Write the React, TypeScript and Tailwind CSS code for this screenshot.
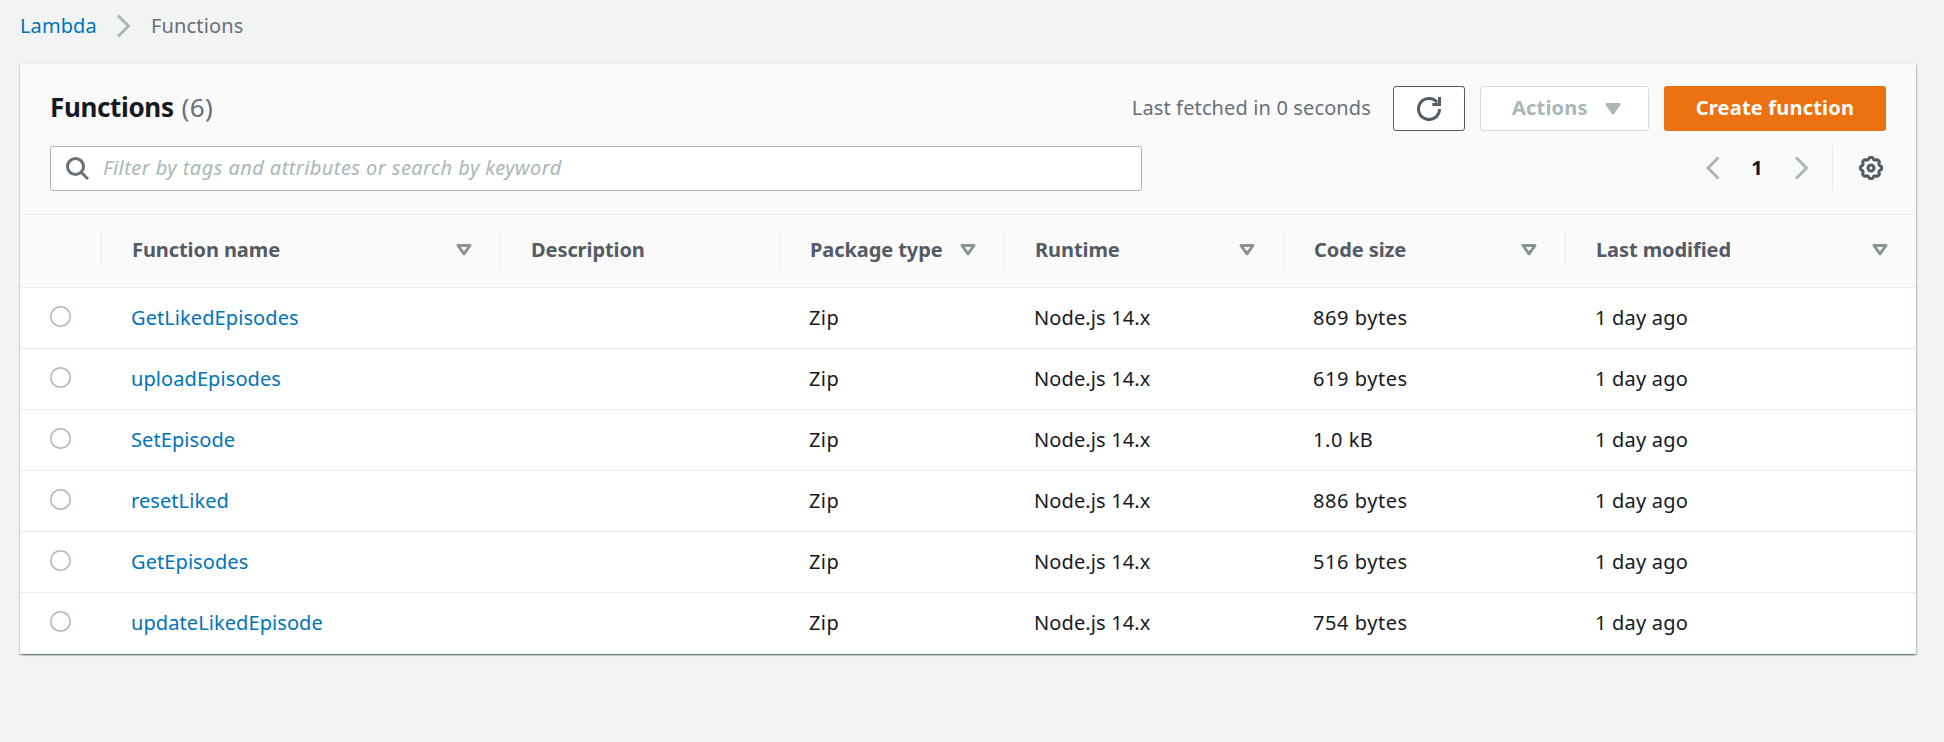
import type { ReactNode } from "react";

type LambdaFunction = {
  name: string;
  packageType: string;
  runtime: string;
  codeSize: string;
  lastModified: string;
};

const functions: LambdaFunction[] = [
  { name: "GetLikedEpisodes", packageType: "Zip", runtime: "Node.js 14.x", codeSize: "869 bytes", lastModified: "1 day ago" },
  { name: "uploadEpisodes", packageType: "Zip", runtime: "Node.js 14.x", codeSize: "619 bytes", lastModified: "1 day ago" },
  { name: "SetEpisode", packageType: "Zip", runtime: "Node.js 14.x", codeSize: "1.0 kB", lastModified: "1 day ago" },
  { name: "resetLiked", packageType: "Zip", runtime: "Node.js 14.x", codeSize: "886 bytes", lastModified: "1 day ago" },
  { name: "GetEpisodes", packageType: "Zip", runtime: "Node.js 14.x", codeSize: "516 bytes", lastModified: "1 day ago" },
  { name: "updateLikedEpisode", packageType: "Zip", runtime: "Node.js 14.x", codeSize: "754 bytes", lastModified: "1 day ago" },
];

const columns = [
  { label: "Function name", sortable: true },
  { label: "Description", sortable: false },
  { label: "Package type", sortable: true },
  { label: "Runtime", sortable: true },
  { label: "Code size", sortable: true },
  { label: "Last modified", sortable: true },
];

const gridColumns = "grid grid-cols-[82px_399px_279px_225px_279px_282px_350px]";

function Icon({ children, className = "" }: { children: ReactNode; className?: string }) {
  return (
    <svg viewBox="0 0 16 16" fill="none" stroke="currentColor" strokeWidth="2" className={`size-6 shrink-0 ${className}`}>
      {children}
    </svg>
  );
}

const ChevronRight = ({ className }: { className?: string }) => (
  <Icon className={className}>
    <path d="M4 1l7 7-7 7" />
  </Icon>
);

const ChevronLeft = ({ className }: { className?: string }) => (
  <Icon className={className}>
    <path d="M11 1L4 8l7 7" />
  </Icon>
);

// Outline of the settings cog: a circle whose radius steps out at eight teeth.
const cogPath =
  Array.from({ length: 96 }, (_, i) => {
    const angle = (i / 96) * Math.PI * 2;
    const radius = 6.45 + 0.6 * Math.tanh(2.2 * Math.cos(8 * angle) + 0.3);
    return `${i === 0 ? "M" : "L"}${(8 + radius * Math.cos(angle)).toFixed(2)} ${(8 + radius * Math.sin(angle)).toFixed(2)}`;
  }).join("") + "Z";

export default function App() {
  return (
    <div className="min-h-[742px] bg-[#f2f3f3] pl-5 font-['Noto_Sans','Open_Sans',sans-serif] text-[20px] leading-[30px] text-[#16191f]">
      <nav className="flex h-[63px] items-start pt-[11px]">
        <a className="w-[92px] tracking-[0.1px] text-[#0073bb]">Lambda</a>
        <ChevronRight className="mt-[3px] text-[#aab7b8]" />
        <span className="ml-[15px] tracking-[0.15px] text-[#687078]">Functions</span>
      </nav>

      <main className="w-[1896px] border-t border-[#eaeded] bg-white shadow-[0_1.5px_1.5px_0_rgba(0,28,36,0.3),1.5px_1.5px_1.5px_0_rgba(0,28,36,0.15),-1.5px_1.5px_1.5px_0_rgba(0,28,36,0.15)]">
        <header className="h-[151px] border-b border-[#eaeded] bg-[#fafafa] pr-[30px] pl-[30px] pt-[22px]">
          <div className="flex h-[45px] items-center">
            <h1 className="flex-1 pb-[3px] text-[26px] leading-[36px]">
              <span className="font-bold tracking-[-0.35px]">Functions</span>
              <span className="ml-[8px] tracking-[0.4px] text-[#687078]">(6)</span>
            </h1>
            <span className="pb-[2px] tracking-[0.13px] text-[#687078]">Last fetched in 0 seconds</span>
            <button className="ml-[22px] flex h-[45px] w-[72px] items-center justify-center rounded-[3px] border border-[#545b64] bg-white text-[#545b64]">
              <Icon>
                <path d="M10.2 5H15V0" />
                <path d="M15 8a7 7 0 1 1-1.6-4.45" />
              </Icon>
            </button>
            <button className="ml-[15px] flex h-[45px] w-[169px] items-center rounded-[3px] border border-[#d5dbdb] bg-white pl-[31px] font-bold text-[#aab7b8]">
              <span className="w-[89px] pb-[2px] text-left tracking-[0.2px]">Actions</span>
              <Icon>
                <path d="M4 5h8l-4 5.6z" fill="currentColor" strokeLinejoin="round" />
              </Icon>
            </button>
            <button className="ml-[15px] h-[45px] w-[222px] rounded-[3px] bg-[#ec7211] pb-[2px] font-bold tracking-[0.2px] text-white">
              Create function
            </button>
          </div>

          <div className="mt-[15px] flex h-[45px] items-center">
            <div className="flex h-[45px] w-[1092px] items-center rounded-[3px] border border-[#aab7b8] bg-white pl-[14px]">
              <Icon className="mb-px text-[#687078]">
                <circle cx="7" cy="7" r="5.35" />
                <path d="M10.8 10.8l4.5 4.5" />
              </Icon>
              <span className="ml-[14px] pb-px tracking-[0.44px] text-[#aab7b8] italic">
                Filter by tags and attributes or search by keyword
              </span>
            </div>
            <div className="ml-auto flex h-[45px] items-center">
              <ChevronLeft className="mb-[2px] text-[#aab7b8]" />
              <span className="w-16 pr-[2px] pb-px text-center font-bold">1</span>
              <ChevronRight className="mb-[2px] text-[#aab7b8]" />
              <div className="ml-[18px] flex h-[45px] w-[54px] items-center justify-end border-l border-[#eaeded] pr-[3px]">
                <Icon className="mb-[2px] text-[#545b64]">
                  <path d={cogPath} strokeWidth="2" strokeLinejoin="round" />
                  <circle cx="8" cy="8" r="2" />
                </Icon>
              </div>
            </div>
          </div>
        </header>

        <div className={`${gridColumns} h-[73px] items-center border-b border-[#eaeded] bg-[#fafafa] font-bold text-[#545b64]`}>
          <div className="mb-[2px] h-9 border-r border-[#eaeded]" />
          {columns.map((column) => (
            <div key={column.label} className="mb-[2px] flex h-9 items-center justify-between border-r border-[#eaeded] pr-6 pl-[30px] last:border-r-0">
              <span className="tracking-[-0.08px] whitespace-nowrap">{column.label}</span>
              {column.sortable && (
                <Icon className="text-[#879596]">
                  <path d="M4 5h8l-4 5.6z" strokeLinejoin="round" />
                </Icon>
              )}
            </div>
          ))}
        </div>

        {functions.map((fn) => (
          <div key={fn.name} className={`${gridColumns} h-[61px] items-center border-b border-[#eaeded]`}>
            <div className="pb-[3px] pl-[30px]">
              <svg viewBox="0 0 21 21" className="size-[21px]" fill="#fff" stroke="#aab7b8" strokeWidth="1.5">
                <circle cx="10.5" cy="10.5" r="9.75" />
              </svg>
            </div>
            <a className="pb-px pl-[29px] tracking-[0.08px] text-[#0073bb]">{fn.name}</a>
            <span />
            <span className="pb-px pl-[29px] tracking-[0.4px]">{fn.packageType}</span>
            <span className="pb-px pl-[29px] tracking-[0.12px]">{fn.runtime}</span>
            <span className="pb-px pl-[29px] tracking-[0.55px]">{fn.codeSize}</span>
            <span className="pb-px pl-[29px] tracking-[0.2px]">{fn.lastModified}</span>
          </div>
        ))}
      </main>
    </div>
  );
}
